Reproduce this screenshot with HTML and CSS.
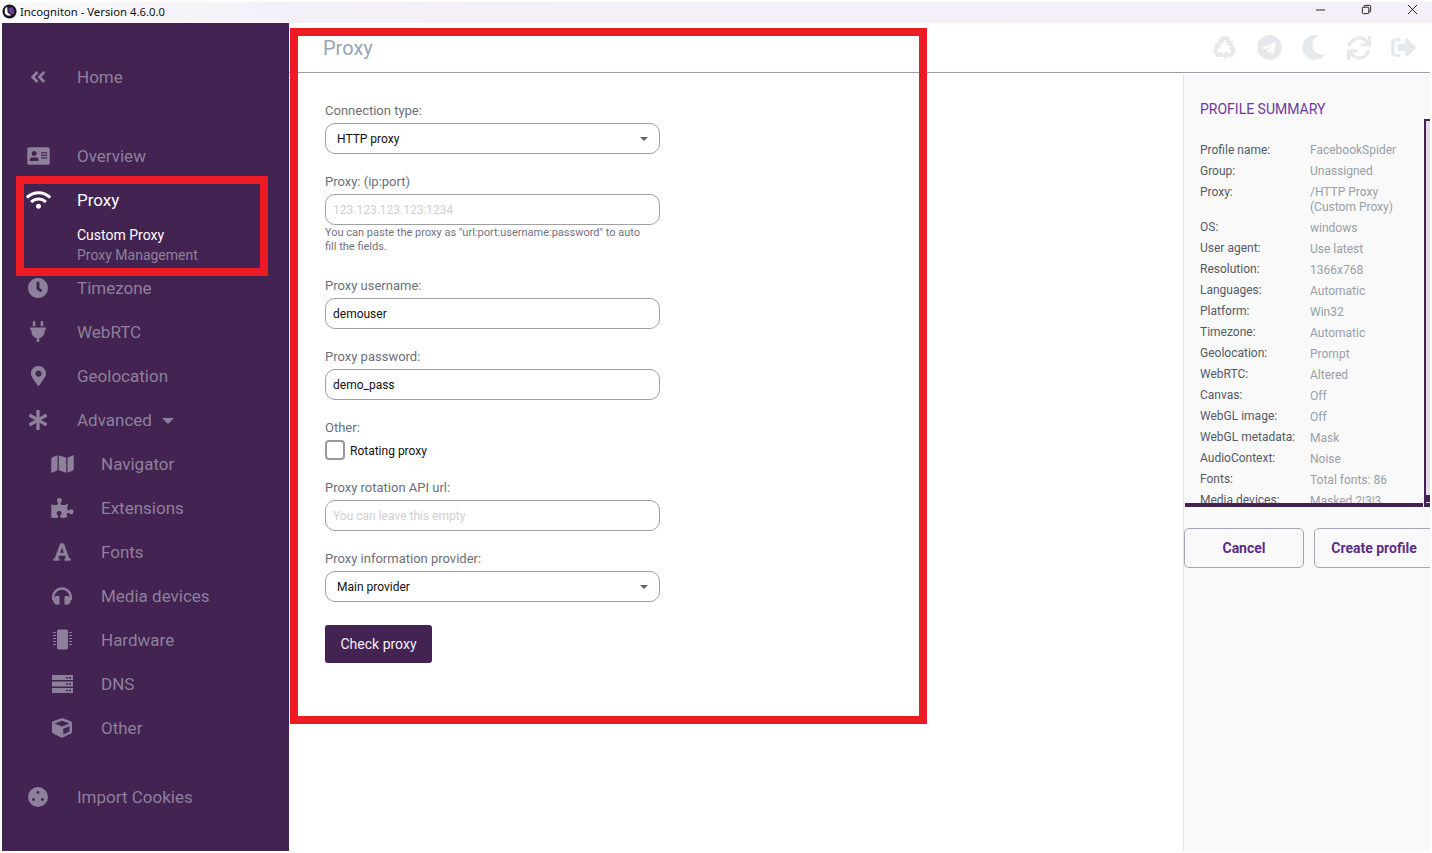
FILE: index.html
```html
<!DOCTYPE html>
<html lang="en">
<head>
<meta charset="utf-8">
<title>Incogniton</title>
<link rel="stylesheet" href="styles.css">
</head>
<body>
<div class="window">
  <header class="titlebar">
    <div class="title-left">
      <svg class="logo" viewBox="0 0 16 16"><circle cx="8" cy="8" r="7.500" fill="#15151c"/><path d="M3 5.500 A6 6 0 0 1 5.500 3 L6 9 L10 12 A6 6 0 0 1 3 10Z" fill="#fff"/><path d="M7 4 L11.500 3.500 L13 8 L9.500 10.500 L7 8Z" fill="#6a3f9e"/><path d="M9.500 10.500 L13 8 L12 11Z" fill="#d0358a"/></svg>
      <span>Incogniton - Version 4.6.0.0</span>
    </div>
    <div class="win-controls">
      <svg viewBox="0 0 12 12"><path d="M1 6.500H11" stroke="#111"/></svg>
      <svg viewBox="0 0 12 12"><rect x="1.500" y="3.500" width="7" height="7" rx="1" fill="none" stroke="#111"/><path d="M3.500 3.500V2.500a1 1 0 0 1 1-1h5a1 1 0 0 1 1 1v5a1 1 0 0 1-1 1h-1" fill="none" stroke="#111"/></svg>
      <svg viewBox="0 0 12 12"><path d="M1 1L11 11M11 1L1 11" stroke="#111"/></svg>
    </div>
  </header>
  <div class="app">
    <nav class="sidebar">
      <a class="nav-item home"><span class="ico"><svg width="16" height="18" viewBox="0 0 448 512"><path fill="currentColor" d="M223.700 239l136-136c9.400-9.400 24.600-9.400 33.900 0l22.600 22.600c9.400 9.400 9.400 24.600 0 33.900L319.900 256l96.400 96.400c9.400 9.400 9.400 24.600 0 33.900L393.700 409c-9.400 9.400-24.600 9.400-33.900 0l-136-136c-9.500-9.400-9.500-24.600-.1-34zm-192 34l136 136c9.400 9.400 24.600 9.400 33.900 0l22.600-22.600c9.400-9.400 9.400-24.600 0-33.900L127.900 256l96.400-96.400c9.400-9.400 9.400-24.600 0-33.900L201.700 103c-9.400-9.400-24.600-9.400-33.900 0l-136 136c-9.500 9.400-9.500 24.600-.1 34z"/></svg></span>Home</a>
      <a class="nav-item overview"><span class="ico"><svg width="23" height="20" viewBox="0 0 576 512"><path fill="currentColor" d="M528 32H48C21.500 32 0 53.500 0 80v352c0 26.500 21.500 48 48 48h480c26.500 0 48-21.500 48-48V80c0-26.500-21.500-48-48-48zm-352 96c35.300 0 64 28.700 64 64s-28.700 64-64 64-64-28.700-64-64 28.700-64 64-64zm112 236.800c0 10.600-10 19.200-22.400 19.200H86.400C74 384 64 375.400 64 364.800v-19.200c0-31.800 30.100-57.600 67.200-57.600h5c12.300 5.100 25.700 8 39.800 8s27.600-2.900 39.800-8h5c37.100 0 67.200 25.800 67.200 57.600v19.200zM512 312c0 4.400-3.600 8-8 8H360c-4.400 0-8-3.600-8-8v-16c0-4.400 3.600-8 8-8h144c4.400 0 8 3.600 8 8v16zm0-64c0 4.400-3.600 8-8 8H360c-4.400 0-8-3.600-8-8v-16c0-4.400 3.600-8 8-8h144c4.400 0 8 3.600 8 8v16zm0-64c0 4.400-3.600 8-8 8H360c-4.400 0-8-3.600-8-8v-16c0-4.400 3.600-8 8-8h144c4.400 0 8 3.600 8 8v16z"/></svg></span>Overview</a>
      <div class="proxy-group">
        <a class="nav-item active"><span class="ico"><svg width="25" height="20" viewBox="0 0 640 512"><path fill="currentColor" d="M634.910 154.880C457.740-8.990 182.190-8.930 5.090 154.880c-6.660 6.160-6.790 16.590-.350 22.980l34.240 33.970c6.140 6.100 16.020 6.230 22.400.380 145.920-133.680 371.300-133.710 517.250 0 6.380 5.850 16.260 5.710 22.400-.380l34.240-33.970c6.430-6.390 6.300-16.820-.360-22.980zM320 352c-35.350 0-64 28.650-64 64s28.650 64 64 64 64-28.650 64-64-28.650-64-64-64zm202.670-83.590c-115.260-101.930-290.210-101.820-405.340 0-6.900 6.100-7.120 16.690-.570 23.150l34.440 33.990c6 5.920 15.660 6.320 22.050.800 83.950-72.570 209.740-72.410 293.490 0 6.390 5.520 16.050 5.130 22.050-.800l34.440-33.990c6.560-6.460 6.330-17.060-.560-23.150z"/></svg></span>Proxy</a>
        <a class="sub-link on">Custom Proxy</a>
        <a class="sub-link">Proxy Management</a>
      </div>
      <a class="nav-item"><span class="ico"><svg width="20" height="20" viewBox="8 8 496 496"><path fill="currentColor" d="M256 8C119 8 8 119 8 256s111 248 248 248 248-111 248-248S393 8 256 8zm57.100 350.100L224.900 294c-3.100-2.300-4.900-5.900-4.900-9.700V116c0-6.600 5.400-12 12-12h48c6.600 0 12 5.400 12 12v137.700l63.500 46.200c5.400 3.900 6.500 11.400 2.600 16.800l-28.200 38.800c-3.900 5.300-11.400 6.500-16.800 2.600z"/></svg></span>Timezone</a>
      <a class="nav-item"><span class="ico"><svg width="16" height="21" viewBox="0 0 384 512"><path fill="currentColor" d="M320,32a32,32,0,0,0-64,0v96h64Zm48,128H16A16,16,0,0,0,0,176v32a16,16,0,0,0,16,16H32v32A160.070,160.070,0,0,0,160,412.800V512h64V412.800A160.070,160.070,0,0,0,352,256V224h16a16,16,0,0,0,16-16V176A16,16,0,0,0,368,160ZM128,32a32,32,0,0,0-64,0v96h64Z"/></svg></span>WebRTC</a>
      <a class="nav-item"><span class="ico"><svg width="15" height="20" viewBox="0 0 384 512"><path fill="currentColor" d="M172.268 501.670C26.970 291.031 0 260.530 0 192 0 85.961 85.961 0 192 0s192 85.961 192 192c0 68.530-26.970 99.031-172.268 309.670-9.535 13.774-29.930 13.773-39.464 0zM192 272c44.183 0 80-35.817 80-80s-35.817-80-80-80-80 35.817-80 80 35.817 80 80 80z"/></svg></span>Geolocation</a>
      <a class="nav-item"><span class="ico"><svg width="20" height="20" viewBox="0 0 512 512"><path fill="currentColor" d="M478.210 334.093L336 256l142.210-78.093c11.795-6.477 15.961-21.384 9.232-33.037l-19.480-33.741c-6.728-11.653-21.720-15.499-33.227-8.523L296 186.718l3.475-162.204C299.763 11.061 288.937 0 275.480 0h-38.960c-13.456 0-24.283 11.061-23.994 24.514L216 186.718 77.265 102.606c-11.506-6.976-26.499-3.130-33.227 8.523l-19.480 33.741c-6.728 11.653-2.562 26.560 9.233 33.037L176 256 33.790 334.093c-11.795 6.477-15.961 21.384-9.232 33.037l19.480 33.741c6.728 11.653 21.721 15.499 33.227 8.523L216 325.282l-3.475 162.204C212.237 500.939 223.064 512 236.520 512h38.961c13.456 0 24.283-11.061 23.995-24.514L296 325.282l138.735 84.112c11.506 6.976 26.499 3.130 33.227-8.523l19.480-33.741c6.728-11.653 2.563-26.560-9.232-33.037z"/></svg></span>Advanced<i class="caret"></i></a>
      <a class="nav-item child"><span class="ico"><svg width="23" height="20" viewBox="0 0 576 512"><path fill="currentColor" d="M0 117.660v346.320c0 11.320 11.430 19.060 21.940 14.860L160 416V32L20.120 87.950A32.006 32.006 0 0 0 0 117.660zM192 416l192 64V96L192 32v384zM554.060 33.160L416 96v384l139.880-55.950A31.996 31.996 0 0 0 576 394.340V48.020c0-11.320-11.430-19.060-21.940-14.860z"/></svg></span>Navigator</a>
      <a class="nav-item child"><span class="ico"><svg width="23" height="20" viewBox="0 0 576 512"><path fill="currentColor" d="M519.442 288.651c-41.519 0-59.500 31.593-82.058 31.593C377.409 320.244 432 144 432 144s-196.288 80-196.288-3.297c0-35.827 36.288-46.328 36.288-85.520C272 19.216 243.885 0 210.539 0c-34.654 0-66.366 18.891-66.366 56.346 0 41.364 31.711 59.277 31.711 81.750C175.885 207.719 0 166.758 0 166.758v333.237s178.635 41.047 178.635-28.662c0-22.473-40-40.107-40-81.471 0-37.456 29.250-56.346 63.577-56.346 33.673 0 61.788 19.216 61.788 54.717 0 35.827-36.288 46.328-36.288 85.520 0 60.803 129.675 25.730 181.230 25.730 0 0-34.725-120.101 25.410-120.101 19.246 0 29.990 35.500 81.575 35.500 37.455 0 56.346-31.712 56.346-66.365-.001-33.346-19.217-61.461-55.000-61.461z"/></svg></span>Extensions</a>
      <a class="nav-item child"><span class="ico"><svg width="18" height="20" viewBox="0 0 448 512"><path fill="currentColor" d="M432 416h-23.410L277.880 53.690A32 32 0 0 0 247.580 32h-47.160a32 32 0 0 0-30.300 21.690L39.410 416H16a16 16 0 0 0-16 16v32a16 16 0 0 0 16 16h128a16 16 0 0 0 16-16v-32a16 16 0 0 0-16-16h-19.600l23.300-64h152.600l23.300 64H304a16 16 0 0 0-16 16v32a16 16 0 0 0 16 16h128a16 16 0 0 0 16-16v-32a16 16 0 0 0-16-16zM176.850 272L224 143.110 271.150 272z"/></svg></span>Fonts</a>
      <a class="nav-item child"><span class="ico"><svg width="20" height="20" viewBox="0 0 512 512"><path fill="currentColor" d="M256 32C114.520 32 0 146.496 0 288v48a32 32 0 0 0 17.689 28.622l14.383 7.191C34.083 431.903 83.421 480 144 480h24c13.255 0 24-10.745 24-24V280c0-13.255-10.745-24-24-24h-24c-31.342 0-59.671 12.879-80 33.627V288c0-105.869 86.131-192 192-192s192 86.131 192 192v1.627C427.671 268.879 399.342 256 368 256h-24c-13.255 0-24 10.745-24 24v176c0 13.255 10.745 24 24 24h24c60.579 0 109.917-48.098 111.928-108.187l14.382-7.191A32 32 0 0 0 512 336v-48c0-141.479-114.496-256-256-256z"/></svg></span>Media devices</a>
      <a class="nav-item child"><span class="ico"><svg width="21" height="21" viewBox="0 0 21 21"><rect x="5" y="0.500" width="11" height="20" rx="1.800" fill="currentColor"/><path d="M1 3.500h3M1 6.500h3M1 9.500h3M1 12.500h3M1 15.500h3M17 3.500h3M17 6.500h3M17 9.500h3M17 12.500h3M17 15.500h3" stroke="currentColor"/></svg></span>Hardware</a>
      <a class="nav-item child"><span class="ico"><svg width="21" height="18" viewBox="0 0 21 18"><path fill-rule="evenodd" d="M0 0h21v5H0zM0 6.500h21v5H0zM0 13h21v5H0zM14 2h2v1.500h-2zM17 2h2v1.500h-2zM14 8.300h2v1.500h-2zM17 8.300h2v1.500h-2zM14 14.800h2v1.500h-2zM17 14.800h2v1.500h-2z" fill="currentColor"/></svg></span>DNS</a>
      <a class="nav-item child"><span class="ico"><svg width="20" height="20" viewBox="0 0 512 512"><path fill="currentColor" d="M239.100 6.300l-208 78c-18.700 7-31.100 25-31.100 45v225.100c0 18.200 10.300 34.800 26.500 42.900l208 104c13.500 6.800 29.400 6.800 42.900 0l208-104c16.300-8.100 26.500-24.800 26.500-42.900V129.300c0-20-12.400-37.900-31.100-44.900l-208-78C262 2.200 250 2.200 239.100 6.300zM256 68.400l192 72v1.100l-192 78-192-78v-1.100l192-72zm32 356V275.500l160-65v133.900l-160 80z"/></svg></span>Other</a>
      <a class="nav-item cookies"><span class="ico"><svg width="20" height="20" viewBox="0 0 20 20"><circle cx="10" cy="10" r="10" fill="currentColor"/><circle cx="10" cy="5.500" r="1.400" fill="#432352"/><circle cx="5.500" cy="12.500" r="1.400" fill="#432352"/><circle cx="14.500" cy="12.500" r="1.400" fill="#432352"/></svg></span>Import Cookies</a>
    </nav>
    <div class="main">
      <div class="topbar">
        <h1>Proxy</h1>
        <div class="top-icons">
          <svg width="25" height="24" viewBox="-12.500 -12 25 24"><g fill="#e6e9ec"><path id="rec" d="M-3.500-11.500H3.500L6.500-6.300 9-7.700 7.500-1.500 1-3.200 3.200-4.700 .3-8.500-2.500-3.700-7-6.300z"/><use href="#rec" transform="rotate(120)"/><use href="#rec" transform="rotate(240)"/></g></svg>
          <svg width="25" height="25" viewBox="0 8 496 496"><path fill="#e6e9ec" d="M248 8C111 8 0 119 0 256s111 248 248 248 248-111 248-248S385 8 248 8zm121.800 169.900l-40.700 191.800c-3 13.600-11.100 16.900-22.400 10.500l-62-45.700-29.900 28.800c-3.300 3.300-6.100 6.100-12.500 6.100l4.400-63.100 114.900-103.800c5-4.400-1.100-6.900-7.700-2.500l-142 89.400-61.200-19.100c-13.300-4.200-13.600-13.300 2.800-19.700l239.100-92.200c11.100-4 20.800 2.700 17.200 19.500z"/></svg>
          <svg class="ti-moon" width="23" height="25" viewBox="27 0 460 512"><path fill="#e6e9ec" d="M283.211 512c78.962 0 151.079-35.925 198.857-94.792 7.068-8.708-.639-21.430-11.562-19.350-124.203 23.654-238.262-71.576-238.262-196.954 0-72.222 38.662-138.635 101.498-174.394 9.686-5.512 7.250-20.197-3.756-22.230A258.156 258.156 0 0 0 283.211 0c-141.309 0-256 114.511-256 256 0 141.309 114.511 256 256 256z"/></svg>
          <svg width="24" height="24" viewBox="0 0 512 512"><path fill="#e6e9ec" d="M440.650 12.570l4 82.770A247.160 247.160 0 0 0 255.830 8C134.730 8 33.910 94.920 12.290 209.820A12 12 0 0 0 24.090 224h49.050a12 12 0 0 0 11.670-9.260 175.910 175.910 0 0 1 317-56.940l-101.460-4.860a12 12 0 0 0-12.570 12v47.410a12 12 0 0 0 12 12H500a12 12 0 0 0 12-12V12a12 12 0 0 0-12-12h-47.370a12 12 0 0 0-11.980 12.570zM255.830 432a175.610 175.610 0 0 1-146-77.800l101.800 4.870a12 12 0 0 0 12.570-12v-47.400a12 12 0 0 0-12-12H12a12 12 0 0 0-12 12V500a12 12 0 0 0 12 12h47.350a12 12 0 0 0 12-12.600l-4.150-82.570A247.170 247.170 0 0 0 255.830 504c121.110 0 221.930-86.920 243.550-201.820a12 12 0 0 0-11.800-14.180h-49.050a12 12 0 0 0-11.670 9.260A175.860 175.860 0 0 1 255.830 432z"/></svg>
          <svg width="25" height="25" viewBox="0 0 504 512"><path fill="#e6e9ec" d="M497 273L329 441c-15 15-41 4.500-41-17v-96H152c-13.300 0-24-10.700-24-24v-96c0-13.300 10.700-24 24-24h136V88c0-21.400 25.900-32 41-17l168 168c9.300 9.400 9.300 24.600 0 34zM192 436v-40c0-6.600-5.400-12-12-12H96c-17.700 0-32-14.300-32-32V160c0-17.700 14.300-32 32-32h84c6.600 0 12-5.400 12-12V76c0-6.600-5.400-12-12-12H96c-53 0-96 43-96 96v192c0 53 43 96 96 96h84c6.600 0 12-5.400 12-12z"/></svg>
        </div>
      </div>
      <div class="content">
        <form class="form">
          <div class="field"><label>Connection type:</label><div class="ctl select">HTTP proxy<i class="sel-caret"></i></div></div>
          <div class="field with-hint"><label>Proxy: (ip:port)</label><div class="ctl input ph">123.123.123.123:1234</div><p class="hint">You can paste the proxy as "url:port:username:password" to auto fill the fields.</p></div>
          <div class="field"><label>Proxy username:</label><div class="ctl input">demouser</div></div>
          <div class="field"><label>Proxy password:</label><div class="ctl input">demo_pass</div></div>
          <div class="field"><label>Other:</label><div class="check"><span class="box"></span><span class="check-text">Rotating proxy</span></div></div>
          <div class="field"><label>Proxy rotation API url:</label><div class="ctl input ph">You can leave this empty</div></div>
          <div class="field last"><label>Proxy information provider:</label><div class="ctl select">Main provider<i class="sel-caret"></i></div></div>
          <button type="button" class="check-btn">Check proxy</button>
        </form>
        <aside class="summary">
          <h2>PROFILE SUMMARY</h2>
          <div class="sum-frame">
            <div class="sum-body">
              <dl class="sum-list">
                <dt>Profile name:</dt><dd>FacebookSpider</dd>
                <dt>Group:</dt><dd>Unassigned</dd>
                <dt>Proxy:</dt><dd class="two-line">/HTTP Proxy<br>(Custom Proxy)</dd>
                <dt>OS:</dt><dd>windows</dd>
                <dt>User agent:</dt><dd>Use latest</dd>
                <dt>Resolution:</dt><dd>1366x768</dd>
                <dt>Languages:</dt><dd>Automatic</dd>
                <dt>Platform:</dt><dd>Win32</dd>
                <dt>Timezone:</dt><dd>Automatic</dd>
                <dt>Geolocation:</dt><dd>Prompt</dd>
                <dt>WebRTC:</dt><dd>Altered</dd>
                <dt>Canvas:</dt><dd>Off</dd>
                <dt>WebGL image:</dt><dd>Off</dd>
                <dt>WebGL metadata:</dt><dd>Mask</dd>
                <dt>AudioContext:</dt><dd>Noise</dd>
                <dt>Fonts:</dt><dd>Total fonts: 86</dd>
                <dt>Media devices:</dt><dd>Masked 2|3|3</dd>
              </dl>
              <div class="track"><span class="thumb"></span></div>
            </div>
            <div class="sum-rule"><span></span><span></span></div>
          </div>
          <div class="sum-actions"><button type="button">Cancel</button><button type="button">Create profile</button></div>
        </aside>
      </div>
    </div>
  </div>
  <div class="mark mark-form"></div>
  <div class="mark mark-nav"></div>
</div>
</body>
</html>
```
FILE: styles.css
```css
* { box-sizing: border-box; }
html, body { margin: 0; height: 100%; background: #fff; overflow: hidden; }
body { font-family: Roboto, "Liberation Sans", sans-serif; }
.window { position: relative; width: 1432px; height: 853px; padding: 2px; display: flex; flex-direction: column; overflow: hidden; }
.titlebar { height: 21px; flex: none; background: linear-gradient(90deg, #fafafb 0, #f4f0f8 20%, #f5eff8 100%); display: flex; justify-content: space-between; font: 11.300px "Noto Sans", sans-serif; color: #111; margin-right: -2px; }
.title-left { display: flex; align-items: center; gap: 3px; padding-bottom: 2px; }
.logo { width: 15px; height: 15px; }
.win-controls { display: flex; gap: 35px; padding: 2px 14px 0 0; }
.win-controls svg { width: 11px; height: 11px; display: block; }
.app { flex: 1; display: flex; min-height: 0; }
.sidebar { width: 287px; flex: none; background: #432352; color: #8d809b; position: relative; padding-top: 32px; }
.nav-item { display: flex; align-items: center; height: 44px; font-size: 17px; padding-left: 75px; position: relative; padding-bottom: 1px; }
.ico { position: absolute; left: 16px; width: 40px; display: flex; justify-content: center; align-items: center; }
.home { margin-bottom: 35px; }
.proxy-group .nav-item { color: #fff; }
.sub-link { display: block; font-size: 14px; padding-left: 75px; height: 20px; line-height: 20px; }
.sub-link.on { color: #fff; margin-top: 3px; }
.proxy-group { height: 88px; }
.child { padding-left: 99px; }
.child .ico { left: 40px; }
.cookies { margin-top: 25px; }
.caret { width: 0; height: 0; border-left: 6px solid transparent; border-right: 6px solid transparent; border-top: 6px solid currentColor; margin-left: 10px; margin-top: 2px; }
.main { flex: 1; min-width: 0; display: flex; flex-direction: column; }
.topbar { height: 50px; flex: none; border-bottom: 1px solid #a09cb0; display: flex; justify-content: space-between; position: relative; }
.topbar h1 { margin: 0; font-size: 20px; font-weight: 400; color: #9aa5b1; padding: 13px 0 0 34px; line-height: 24px; }
.top-icons { display: flex; align-items: center; gap: 20px; height: 49px; padding-right: 14px; }
.ti-moon { margin-right: 2px; }
.content { flex: 1; display: flex; min-height: 0; }
.form { flex: 1; padding: 30px 0 0 36px; }
.field { width: 335px; margin-bottom: 20px; }
.field.with-hint { margin-bottom: 24px; }
.field.last { margin-bottom: 23px; }
.field label { display: block; font-size: 13px; line-height: 16px; color: #6c6f7d; margin-bottom: 4px; }
.ctl { height: 31px; border: 1px solid #a0a0a0; border-radius: 10px; font-size: 12px; line-height: 29px; padding-top: 1px; color: #111; background: #fff; position: relative; }
.select { padding-left: 11px; }
.input { padding-left: 7px; }
.ph { color: #cfcfcf; }
.sel-caret { position: absolute; right: 11px; top: 13px; width: 0; height: 0; border-left: 4.500px solid transparent; border-right: 4.500px solid transparent; border-top: 4.500px solid #666; }
.hint { margin: 1px 0 0; font-size: 11px; line-height: 14px; color: #70747f; width: 320px; }
.check { display: flex; font-size: 12px; color: #111; height: 20px; gap: 5px; }
.check-text { line-height: 22px; }
.box { width: 20px; height: 20px; border: 2px solid #9a9a9a; border-radius: 4px; background: #fff; }
.check-btn { display: block; width: 107px; height: 38px; border: 0; border-radius: 3px; background: #432352; color: #f3eff6; font: 14px Roboto, sans-serif; }
.summary { width: 247px; flex: none; background: #f9f9f9; border-left: 1px solid #e3e3e3; padding-left: 16px; position: relative; overflow: hidden; margin-top: 1px; }
.summary h2 { margin: 0; padding-top: 27px; font-size: 14px; line-height: 16px; font-weight: 400; color: #6f3a9c; }
.sum-frame { margin: 2px 0 0 -15px; width: 245px; }
.sum-body { display: flex; height: 384px; }
.sum-list { flex: none; width: 239px; height: 100%; overflow: hidden; margin: 0; padding: 24px 0 0 15px; display: grid; grid-template-columns: 110px 1fr; grid-auto-rows: min-content; row-gap: 6px; font-size: 12px; line-height: 15px; }
.sum-list dt { color: #555a66; }
.sum-list dd { margin: 0; color: #9aa0a8; }
.sum-list dd.two-line { margin-bottom: -1px; }
.sum-list dd.two-line ~ dd { margin: 1px 0 -1px; }
.track { flex: none; width: 6px; border: solid #432352; border-width: 2px 0 0 2px; background: #e0e0e0; display: flex; align-items: flex-end; }
.thumb { display: block; width: 100%; height: 7px; background: #432352; margin-bottom: 1px; }
.sum-rule { display: flex; height: 4px; gap: 1px; }
.sum-rule span { background: #432352; width: 238px; }
.sum-rule span:last-child { width: 6px; }
.sum-actions { display: flex; gap: 10px; margin: 21px 0 0 -16px; }
.sum-actions button { width: 120px; height: 40px; flex: none; border: 1px solid #a9a4b8; border-radius: 5px; background: transparent; color: #5f2d86; font: 700 14px Roboto, sans-serif; }
.mark { position: absolute; border-style: solid; border-color: #ed1c24; pointer-events: none; }
.mark-form { left: 290px; top: 28px; width: 637px; height: 696px; border-width: 8px; }
.mark-nav { left: 16px; top: 176px; width: 252px; height: 100px; border-width: 8px; }
```
